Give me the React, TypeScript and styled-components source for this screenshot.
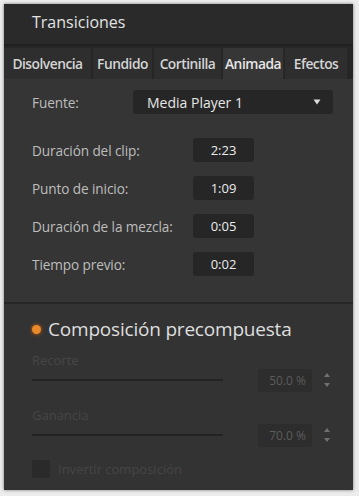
import React from "react";
import styled, { createGlobalStyle } from "styled-components";

const Global = createGlobalStyle`
  html, body { margin: 0; padding: 0; background: #ececec; }
  body { font-family: "Open Sans", "Noto Sans", sans-serif; }
  * { box-sizing: border-box; }
`;

const Page = styled.div`
  width: 359px;
  height: 496px;
  padding: 4px 6px 6px 4px;
`;

const Panel = styled.div`
  width: 349px;
  height: 486px;
  background: #2f2f2f;
  box-shadow: 0 0 3px rgba(0, 0, 0, 0.5);
  display: flex;
  flex-direction: column;
  overflow: hidden;
`;

const Header = styled.div`
  height: 42px;
  display: flex;
  align-items: center;
  padding: 0 0 4px 28px;
  font-size: 16px;
  color: #e2e2e2;
  background: #2a2a2a;
  border-bottom: 2px solid #202020;
`;

const Tabs = styled.div`
  display: flex;
  height: 33px;
  background: #262626;
  gap: 2px;
  padding-top: 2px;
`;

const Tab = styled.div<{ $w: number; $active?: boolean }>`
  width: ${(p) => p.$w}px;
  display: flex;
  align-items: center;
  justify-content: center;
  font-size: 13.8px;
  font-weight: 600;
  letter-spacing: -0.5px;
  white-space: nowrap;
  color: ${(p) => (p.$active ? "#e6e6e6" : "#d4d4d4")};
  background: ${(p) => (p.$active ? "#363636" : "#2e2e2e")};
`;

const Upper = styled.div`
  background: #353535;
  padding: 11px 0 0 28px;
  height: 225px;
  display: flex;
  flex-direction: column;
  gap: 14px;
  border-bottom: 2px solid #262626;
`;

const Row = styled.div<{ $mb?: number }>`
  display: flex;
  align-items: center;
  height: 24px;
  margin-bottom: ${(p) => p.$mb ?? 0}px;
`;

const Label = styled.div<{ $w: number }>`
  width: ${(p) => p.$w}px;
  font-size: 13.6px;
  letter-spacing: -0.1px;
  color: #bdbdbd;
  white-space: nowrap;
`;

const Dropdown = styled.div`
  width: 200px;
  height: 24px;
  background: #262626;
  border-radius: 3px;
  display: flex;
  align-items: center;
  justify-content: space-between;
  padding: 0 12px 0 14px;
  font-size: 14px;
  color: #e6e6e6;
`;

const ValueBox = styled.div`
  width: 61px;
  height: 24px;
  background: #262626;
  border-radius: 3px;
  display: flex;
  align-items: center;
  justify-content: center;
  font-size: 13px;
  color: #ececec;
`;

const Lower = styled.div`
  flex: 1;
  background: #333333;
  padding: 13px 0 0 28px;
  display: flex;
  flex-direction: column;
`;

const TitleRow = styled.div`
  display: flex;
  align-items: center;
  height: 24px;
  gap: 7px;
  font-size: 19px;
  letter-spacing: -0.2px;
  color: #dedede;
`;

const Dot = styled.span`
  width: 9px;
  height: 9px;
  border-radius: 50%;
  background: #e88a2a;
  box-shadow: 0 0 3px 1px rgba(160, 80, 20, 0.8);
`;

const FadedLabel = styled.div<{ $mt: number }>`
  margin-top: ${(p) => p.$mt}px;
  font-size: 13px;
  color: #464646;
  height: 15px;
  line-height: 15px;
`;

const SliderRow = styled.div`
  display: flex;
  align-items: center;
  height: 24px;
`;

const Track = styled.div`
  width: 191px;
  height: 2px;
  background: #232323;
`;

const PercentBox = styled.div`
  margin-left: 35px;
  width: 54px;
  height: 23px;
  background: #2d2d2d;
  border-radius: 2px;
  display: flex;
  align-items: center;
  justify-content: flex-end;
  padding-right: 6px;
  font-size: 12px;
  color: #5c5c5c;
`;

const Spinner = styled.div`
  margin-left: 12px;
  display: flex;
  flex-direction: column;
  gap: 6px;
`;

const CheckRow = styled.div`
  margin-top: 13px;
  display: flex;
  align-items: center;
  gap: 8px;
  font-size: 13px;
  color: #454545;
`;

const Check = styled.div`
  width: 18px;
  height: 18px;
  background: #2a2a2a;
  border-radius: 2px;
`;

const Caret = () => (
  <svg width="8" height="6" viewBox="0 0 8 6">
    <path d="M0.5 0.5 L7.5 0.5 L4 5.5 Z" fill="#dcdcdc" />
  </svg>
);

const Arrows = () => (
  <Spinner>
    <svg width="6" height="4" viewBox="0 0 6 4">
      <path d="M0 4 L6 4 L3 0 Z" fill="#707070" />
    </svg>
    <svg width="6" height="4" viewBox="0 0 6 4">
      <path d="M0 0 L6 0 L3 4 Z" fill="#707070" />
    </svg>
  </Spinner>
);

const tabs: [string, number, boolean?][] = [
  ["Disolvencia", 87],
  ["Fundido", 59],
  ["Cortinilla", 67],
  ["Animada", 60, true],
  ["Efectos", 62],
];

const rows: [string, string][] = [
  ["Duración del clip:", "2:23"],
  ["Punto de inicio:", "1:09"],
  ["Duración de la mezcla:", "0:05"],
  ["Tiempo previo:", "0:02"],
];

export default function App() {
  return (
    <>
      <Global />
      <Page>
        <Panel>
          <Header>Transiciones</Header>
          <Tabs>
            {tabs.map(([t, w, a]) => (
              <Tab key={t} $w={w} $active={a}>
                {t}
              </Tab>
            ))}
          </Tabs>
          <Upper>
            <Row $mb={10}>
              <Label $w={101}>Fuente:</Label>
              <Dropdown>
                <span>Media Player 1</span>
                <Caret />
              </Dropdown>
            </Row>
            {rows.map(([l, v]) => (
              <Row key={l}>
                <Label $w={161}>{l}</Label>
                <ValueBox>{v}</ValueBox>
              </Row>
            ))}
          </Upper>
          <Lower>
            <TitleRow>
              <Dot />
              <span>Composición precompuesta</span>
            </TitleRow>
            <FadedLabel $mt={12}>Recorte</FadedLabel>
            <SliderRow>
              <Track />
              <PercentBox>50.0 %</PercentBox>
              <Arrows />
            </SliderRow>
            <FadedLabel $mt={16}>Ganancia</FadedLabel>
            <SliderRow>
              <Track />
              <PercentBox>70.0 %</PercentBox>
              <Arrows />
            </SliderRow>
            <CheckRow>
              <Check />
              <span>Invertir composición</span>
            </CheckRow>
          </Lower>
        </Panel>
      </Page>
    </>
  );
}
